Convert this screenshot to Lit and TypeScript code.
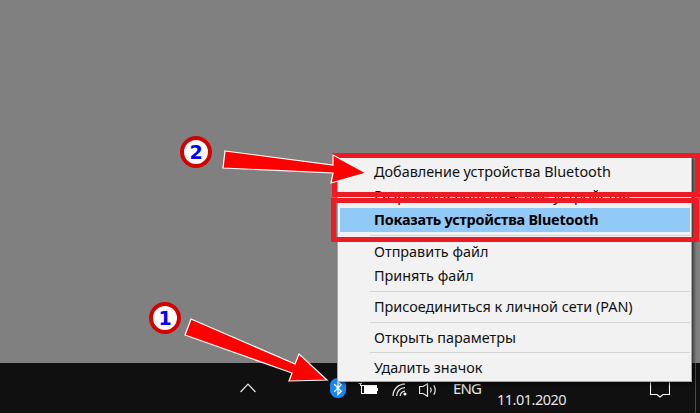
import { LitElement, html, css, svg } from "lit";
import { customElement } from "lit/decorators.js";

const rows = [
  { t: "Добавление устройства Bluetooth" },
  { t: "Разрешить подключение устройства" },
  { t: "Показать устройства Bluetooth", cls: "active" },
  { sep: "wide" },
  { t: "Отправить файл" },
  { t: "Принять файл" },
  { sep: "mid" },
  { t: "Присоединиться к личной сети (PAN)" },
  { sep: "mid" },
  { t: "Открыть параметры" },
  { sep: "narrow" },
  { t: "Удалить значок" },
];

@customElement("app-root")
export class AppRoot extends LitElement {
  static styles = css`
    :host { display: block; width: 700px; height: 413px; position: relative; overflow: hidden; font-family: "Noto Sans", sans-serif; }
    .page { display: flex; flex-direction: column; height: 413px; background: #808080; }
    .desktop { flex: 1; }
    .taskbar { height: 50px; background: #101010; display: flex; align-items: flex-start; color: #e6e6e6; font-size: 14px; }
    .taskbar svg { display: block; flex: none; }
    .chev { margin: 20px 0 0 240px; }
    .bt { margin: 15px 0 0 74px; }
    .bat { margin: 20px 0 0 12px; }
    .wifi { margin: 20px 0 0 14px; }
    .vol { margin: 20px 0 0 11px; }
    .eng { margin: 15px 0 0 14px; width: 28px; line-height: 20px; font-size: 15px; letter-spacing: -0.9px; white-space: nowrap; }
    .date { margin: 26px 0 0 16px; width: 71px; line-height: 20px; font-size: 14.5px; letter-spacing: -0.5px; white-space: nowrap; }
    .note { margin: 19px 0 0 82px; }
    .divider { margin-left: 25px; width: 1px; height: 50px; background: #4a4a4a; }

    .menu { position: absolute; left: 337px; top: 156px; width: 355px; height: 226px; box-sizing: border-box; padding: 3px 1px 0 2px; border: 1px solid #a8a8a8; background: #f2f2f2; box-shadow: 2px 2px 3px rgba(0,0,0,.55); font-size: 14.4px; color: #111; }
    .row { height: 24px; line-height: 24px; padding-left: 34px; white-space: nowrap; }
    .row.active { background: #91c9f7; font-weight: 700; color: #000; letter-spacing: -0.2px; }
    .sep { margin-left: 30px; background: linear-gradient(#d2d2d2, #d2d2d2) no-repeat 0 3px / 100% 1px; }
    .sep.wide { height: 8px; }
    .sep.mid { height: 7px; }
    .sep.narrow { height: 6px; background-position: 0 2px; }

    .frame { position: absolute; box-sizing: border-box; border: 5px solid #ed1c24; height: 44px; width: 368px; }
    .f1 { left: 332px; top: 153px; }
    .f2 { left: 331px; top: 198px; }
    .arrows { position: absolute; left: 0; top: 0; }
    .badge { position: absolute; box-sizing: border-box; width: 32px; height: 32px; border-radius: 50%; border: 4px solid #d40000; background: #fff; color: #0000ff; font: 700 19px/24px "DejaVu Sans", sans-serif; text-align: center; }
    .b1 { left: 149px; top: 302px; }
    .b2 { left: 180px; top: 136px; }
  `;

  render() {
    return html`
      <div class="page">
        <div class="desktop"></div>
        <div class="taskbar">
          <svg class="chev" width="16" height="10" viewBox="0 0 16 10" fill="none" stroke="#e8e8e8" stroke-width="1.2"><path d="M.5 9 8 1.2 15.5 9"/></svg>
          <svg class="bt" width="16" height="20" viewBox="0 0 16 20"><rect width="16" height="20" rx="7.5" fill="#1a86f2"/><path d="M4.2 6.2 11.2 13.2 8 16.4V3.6L11.2 6.8 4.2 13.8" fill="none" stroke="#fff" stroke-width="1.3"/></svg>
          <svg class="bat" width="20" height="11" viewBox="0 0 20 11" fill="none" stroke="#fff"><path d="M.5.5H4M2.5.5V3"/><rect x="3.5" y="2.5" width="15" height="8"/><rect x="6" y="3" width="12" height="7" fill="#fff" stroke="none"/><path d="M19.5 5v3"/></svg>
          <svg class="wifi" width="16" height="13" viewBox="0 0 16 13" fill="none" stroke="#e8e8e8" stroke-width="1.3"><path d="M1 13A12 12 0 0 1 13 1M4.6 13A8.4 8.4 0 0 1 13 4.6M8.2 13A4.8 4.8 0 0 1 13 8.2"/><circle cx="13" cy="11" r="1.6" fill="#fff" stroke="none"/></svg>
          <svg class="vol" width="20" height="14" viewBox="0 0 20 14" fill="none" stroke="#e8e8e8" stroke-width="1.2"><path d="M.5 3.5H4L8.5 .7V13.3L4 10.5H.5Z"/><path d="M11.5 4.5Q13 7 11.5 9.5M14.8 2.2Q17.6 7 14.8 11.8"/></svg>
          <div class="eng">ENG</div>
          <div class="date">11.01.2020</div>
          <svg class="note" width="20" height="16" viewBox="0 0 20 16" fill="none" stroke="#fff" stroke-width="1.1"><path d="M.5 0V12.5H7L10 15 13 12.5H19.5V0"/></svg>
          <div class="divider"></div>
        </div>
      </div>
      <div class="menu">
        ${rows.map((r) =>
          r.sep
            ? html`<div class="sep ${r.sep}"></div>`
            : html`<div class="row ${r.cls ?? ""}">${r.t}</div>`
        )}
      </div>
      <div class="frame f1"></div>
      <div class="frame f2"></div>
      <svg class="arrows" width="700" height="413" viewBox="0 0 700 413">
        ${svg`<polygon points="225,151 333,165 333,155 366,173 331,183 333,173 223,168" fill="#ff0000" stroke="#fff" stroke-width="1.2"/>
        <polygon points="191,319 295,364 299,354 327,380 289,381 292,373 185,335" fill="#ff0000" stroke="#fff" stroke-width="1.2"/>`}
      </svg>
      <div class="badge b1">1</div>
      <div class="badge b2">2</div>
    `;
  }
}
